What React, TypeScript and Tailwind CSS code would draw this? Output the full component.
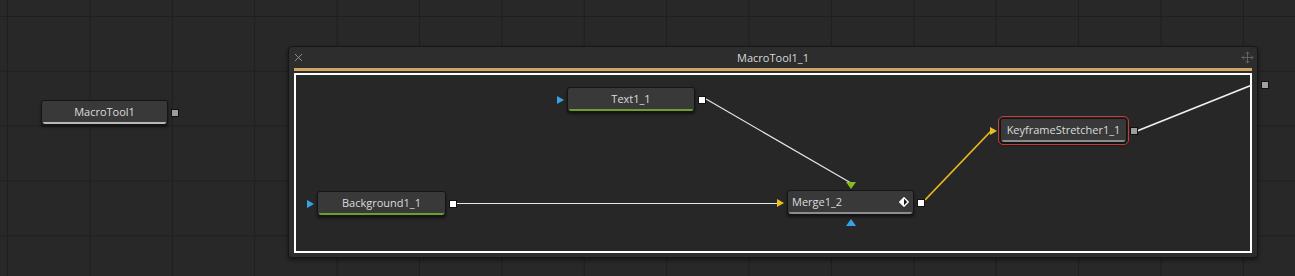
import React from 'react';
import { Move, X } from 'lucide-react';

type Dir = 'right' | 'down' | 'up';

const Tri: React.FC<{ color: string; dir: Dir; className?: string }> = ({ color, dir, className }) => {
  const pts = dir === 'right' ? '0,0 7,4 0,8' : dir === 'down' ? '0,0 10,0 5,7' : '5,0 10,7 0,7';
  const w = dir === 'right' ? 7 : 10;
  const h = dir === 'right' ? 8 : 7;
  return (
    <svg className={className} width={w} height={h} viewBox={`0 0 ${w} ${h}`}>
      <polygon points={pts} fill={color} />
    </svg>
  );
};

interface NodeProps {
  x: number;
  y: number;
  w: number;
  label: string;
  bar: string;
  input?: string;
  output: string;
  left?: boolean;
  selected?: boolean;
  icon?: React.ReactNode;
  extra?: React.ReactNode;
}

// One tool tile on the flow canvas, with its input arrow and output square
const Node: React.FC<NodeProps> = ({ x, y, w, label, bar, input, output, left, selected, icon, extra }) => {
  return (
    <div className="absolute flex items-center gap-[3px]" style={{ left: input ? x - 10 : x, top: y }}>
      {input && <Tri color={input} dir="right" />}
      <div
        className={`relative flex h-[25px] flex-col rounded-[3px] border border-[#151515] bg-[#393939] shadow-[0_2px_3px_rgba(0,0,0,0.55)] ${
          selected ? 'outline outline-1 outline-offset-[1px] outline-[#c43c3c]' : ''
        }`}
        style={{ width: w }}
      >
        <div
          className={`flex flex-1 items-center text-[11px] leading-none text-[#dcdcdc] ${
            left ? 'justify-between pl-[4px] pr-[4px]' : 'justify-center'
          }`}
        >
          <span>{label}</span>
          {icon}
        </div>
        <div className="mx-[1px] h-[2px] rounded-b-[2px]" style={{ background: bar }} />
        {extra}
      </div>
      <div className="h-[8px] w-[8px] border border-[#111]" style={{ background: output }} />
    </div>
  );
};

const App: React.FC = () => {
  return (
    <div
      className="relative h-[276px] w-[1295px] overflow-hidden bg-[#282828] [background-image:linear-gradient(to_right,#1e1e1e_1px,transparent_1px),linear-gradient(to_bottom,#1f1f1f_1px,transparent_1px)] [background-size:82.4px_54.8px] [background-position:7px_16px]"
      style={{ fontFamily: '"Open Sans", "Noto Sans", sans-serif' }}
    >
      {/* macro group frame */}
      <div className="absolute left-[288px] top-[46px] flex h-[212px] w-[970px] flex-col rounded-[4px] border border-[#161616] bg-[#2d2d2d] shadow-[0_2px_4px_rgba(0,0,0,0.5)]">
        <div className="flex h-[21px] items-center justify-between px-[3px] text-[11px] text-[#d8d8d8]">
          <span className="flex w-[16px]">
            <X size={13} strokeWidth={1.6} color="#9a9a9a" />
          </span>
          <span className="leading-none">MacroTool1_1</span>
          <span className="flex w-[16px] justify-end">
            <Move size={13} strokeWidth={1.6} color="#6a6a6a" />
          </span>
        </div>
        <div className="mx-[5px] h-[3px] bg-[#d0a462]" />
        <div className="mx-[5px] mb-[4px] mt-[2px] flex-1 border-2 border-white bg-[#272727]" />
        {/* macro output */}
        <div className="absolute left-[972px] top-[34px] h-[8px] w-[8px] border border-[#111] bg-[#a0a0a0]" />
      </div>

      {/* wires */}
      <svg className="pointer-events-none absolute inset-0" width={1295} height={276}>
        <line x1={706} y1={99} x2={851} y2={183} stroke="#e6e6e6" strokeWidth={1.2} />
        <line x1={456} y1={203.5} x2={777} y2={203.5} stroke="#e6e6e6" strokeWidth={1.2} />
        <line x1={925} y1={200} x2={991} y2={131} stroke="#e8b81e" strokeWidth={1.8} />
        <line x1={1137} y1={131} x2={1252} y2={85} stroke="#f0f0f0" strokeWidth={1.6} />
      </svg>

      <Node x={41} y={100} w={127} label="MacroTool1" bar="#b8b8b8" output="#9c9c9c" />

      <Node x={567} y={87} w={128} label="Text1_1" bar="#6e9e2e" input="#36a3e6" output="#ffffff" />

      <Node x={317} y={191} w={129} label="Background1_1" bar="#6e9e2e" input="#36a3e6" output="#ffffff" />

      <Node
        x={787}
        y={190}
        w={127}
        label="Merge1_2"
        bar="#8c8c8c"
        input="#e8c11e"
        output="#ffffff"
        left
        icon={
          <svg width={10} height={10} viewBox="0 0 10 10">
            <polygon points="5,0.8 9.2,5 5,9.2 0.8,5" fill="#1a1a1a" stroke="#ffffff" strokeWidth={1.4} />
            <polygon points="5,0.8 5,9.2 0.8,5" fill="#ffffff" />
          </svg>
        }
        extra={
          <>
            <Tri color="#86bd1e" dir="down" className="absolute left-[58px] top-[-9px]" />
            <Tri color="#36a3e6" dir="up" className="absolute left-[58px] top-[28px]" />
          </>
        }
      />

      <Node
        x={1000}
        y={118}
        w={127}
        label="KeyframeStretcher1_1"
        bar="#8c8c8c"
        input="#e8c11e"
        output="#9c9c9c"
        selected
      />
    </div>
  );
};

export default App;
